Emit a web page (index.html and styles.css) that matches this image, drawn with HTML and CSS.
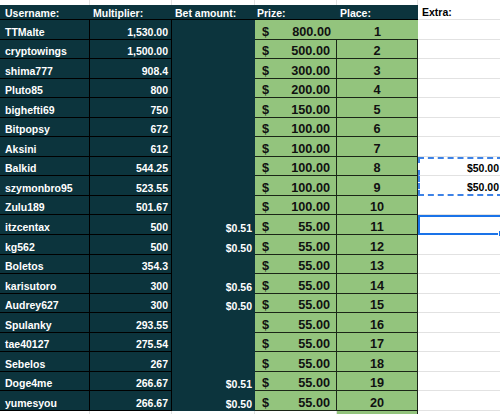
FILE: index.html
```html
<!DOCTYPE html>
<html lang="en">
<head>
    <meta charset="UTF-8">
    <title>Leaderboard</title>
    <link rel="stylesheet" href="styles.css">
</head>
<body>
<div class="sheet">
    <!-- row above the header, cut off by the window -->
    <div class="c gap"></div><div class="c gap"></div><div class="c gap"></div>
    <div class="c gap"></div><div class="c gap"></div><div class="c gap ex-gap"></div>

    <div class="c hd hd-nm">Username:</div>
    <div class="c hd">Multiplier:</div>
    <div class="c hd">Bet amount:</div>
    <div class="c hd hd-pz">Prize:</div>
    <div class="c hd">Place:</div>
    <div class="c ex">Extra:</div>

    <div class="c nm">TTMalte</div><div class="c mu">1,530.00</div><div class="c bet"></div>
    <div class="c pz first"><span>$</span><span>800.00</span></div><div class="c pl first">1</div><div class="c ex"></div>

    <div class="c nm">cryptowings</div><div class="c mu">1,500.00</div><div class="c bet"></div>
    <div class="c pz"><span>$</span><span>500.00</span></div><div class="c pl">2</div><div class="c ex"></div>

    <div class="c nm">shima777</div><div class="c mu">908.4</div><div class="c bet"></div>
    <div class="c pz"><span>$</span><span>300.00</span></div><div class="c pl">3</div><div class="c ex"></div>

    <div class="c nm">Pluto85</div><div class="c mu">800</div><div class="c bet"></div>
    <div class="c pz"><span>$</span><span>200.00</span></div><div class="c pl">4</div><div class="c ex"></div>

    <div class="c nm">bighefti69</div><div class="c mu">750</div><div class="c bet"></div>
    <div class="c pz"><span>$</span><span>150.00</span></div><div class="c pl">5</div><div class="c ex"></div>

    <div class="c nm">Bitpopsy</div><div class="c mu">672</div><div class="c bet"></div>
    <div class="c pz"><span>$</span><span>100.00</span></div><div class="c pl">6</div><div class="c ex"></div>

    <div class="c nm">Aksini</div><div class="c mu">612</div><div class="c bet"></div>
    <div class="c pz"><span>$</span><span>100.00</span></div><div class="c pl">7</div><div class="c ex"></div>

    <div class="c nm">Balkid</div><div class="c mu">544.25</div><div class="c bet"></div>
    <div class="c pz"><span>$</span><span>100.00</span></div><div class="c pl">8</div><div class="c ex val copy-top">$50.00</div>

    <div class="c nm">szymonbro95</div><div class="c mu">523.55</div><div class="c bet"></div>
    <div class="c pz"><span>$</span><span>100.00</span></div><div class="c pl">9</div><div class="c ex val copy-bottom">$50.00</div>

    <div class="c nm">Zulu189</div><div class="c mu">501.67</div><div class="c bet"></div>
    <div class="c pz"><span>$</span><span>100.00</span></div><div class="c pl">10</div><div class="c ex"></div>

    <div class="c nm">itzcentax</div><div class="c mu">500</div><div class="c bet">$0.51</div>
    <div class="c pz"><span>$</span><span>55.00</span></div><div class="c pl">11</div><div class="c ex active"><span class="handle"></span></div>

    <div class="c nm">kg562</div><div class="c mu">500</div><div class="c bet">$0.50</div>
    <div class="c pz"><span>$</span><span>55.00</span></div><div class="c pl">12</div><div class="c ex"></div>

    <div class="c nm">Boletos</div><div class="c mu">354.3</div><div class="c bet"></div>
    <div class="c pz"><span>$</span><span>55.00</span></div><div class="c pl">13</div><div class="c ex"></div>

    <div class="c nm">karisutoro</div><div class="c mu">300</div><div class="c bet">$0.56</div>
    <div class="c pz"><span>$</span><span>55.00</span></div><div class="c pl">14</div><div class="c ex"></div>

    <div class="c nm">Audrey627</div><div class="c mu">300</div><div class="c bet">$0.50</div>
    <div class="c pz"><span>$</span><span>55.00</span></div><div class="c pl">15</div><div class="c ex"></div>

    <div class="c nm">Spulanky</div><div class="c mu">293.55</div><div class="c bet"></div>
    <div class="c pz"><span>$</span><span>55.00</span></div><div class="c pl">16</div><div class="c ex"></div>

    <div class="c nm">tae40127</div><div class="c mu">275.54</div><div class="c bet"></div>
    <div class="c pz"><span>$</span><span>55.00</span></div><div class="c pl">17</div><div class="c ex"></div>

    <div class="c nm">Sebelos</div><div class="c mu">267</div><div class="c bet"></div>
    <div class="c pz"><span>$</span><span>55.00</span></div><div class="c pl">18</div><div class="c ex"></div>

    <div class="c nm">Doge4me</div><div class="c mu">266.67</div><div class="c bet">$0.51</div>
    <div class="c pz"><span>$</span><span>55.00</span></div><div class="c pl">19</div><div class="c ex"></div>

    <div class="c nm">yumesyou</div><div class="c mu">266.67</div><div class="c bet">$0.50</div>
    <div class="c pz"><span>$</span><span>55.00</span></div><div class="c pl">20</div><div class="c ex"></div>

    <!-- next row, cut off -->
    <div class="c gap"></div><div class="c gap"></div><div class="c gap"></div>
    <div class="c gap"></div><div class="c pl foot"></div><div class="c gap ex-gap"></div>
</div>
</body>
</html>
```

FILE: styles.css
```css
html, body {
    margin: 0;
    width: 500px;
    height: 414px;
    overflow: hidden;
    background: #fff;
}
.sheet {
    display: grid;
    grid-template-columns: 90px 82px 83px 82px 81px 85px;
    grid-template-rows: 5px 15px repeat(20, 19.55px) 4px;
    font-family: "Liberation Sans", Arial, sans-serif;
    font-size: 10.5px;
    font-weight: bold;
    line-height: 12px;
}
.c {
    box-sizing: border-box;
    display: flex;
    align-items: flex-end;
    padding: 0 3px 1px 3px;
    white-space: nowrap;
    overflow: hidden;
}

.gap { border-right: 1px solid #e2e2e2; }
.ex-gap { border-right: none; }

.hd {
    background: #0c343d;
    color: #fff;
    border-bottom: 1px solid #000;
    padding-bottom: 0;
}
.hd-nm { padding-left: 5px; }
.hd-pz { padding-left: 2px; }

.nm, .mu {
    background: #0c343d;
    color: #fff;
    border-right: 1px solid #000;
    border-bottom: 1px solid #000;
}
.nm { padding-left: 5px; }
.mu { justify-content: flex-end; }
.bet {
    background: #0c343d;
    color: #fff;
    justify-content: flex-end;
}

.pz, .pl {
    background: #93c47d;
    color: #111;
    font-size: 12.7px;
    line-height: 14px;
    padding-bottom: 0;
    border-right: 1px solid #1b2617;
    border-bottom: 1px solid #1b2617;
}
.pz {
    justify-content: space-between;
    padding-left: 7px;
    padding-right: 6px;
}
.pl { justify-content: center; }
.first { border-right: none; }
.foot { border-bottom: none; }

.ex {
    color: #000;
    border-bottom: 1px solid #e2e2e2;
    padding-left: 4px;
}
.val {
    justify-content: flex-end;
    padding-right: 2px;
}

/* dashed copy range over two cells */
.copy-top, .copy-bottom {
    border-left: 2px dashed #3d82e6;
    border-right: 2px dashed #3d82e6;
}
.copy-top { border-top: 2px dashed #3d82e6; }
.copy-bottom { border-bottom: 2px dashed #3d82e6; }

.active {
    border: 2px solid #1a73e8;
    overflow: visible;
    position: relative;
}
.handle {
    position: absolute;
    right: -4px;
    bottom: -4px;
    width: 5px;
    height: 5px;
    background: #1a73e8;
    border: 1px solid #fff;
}
```
